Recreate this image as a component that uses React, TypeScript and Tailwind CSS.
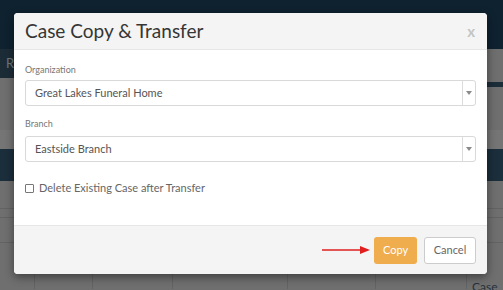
import React from "react";

function SelectBox({ value }: { value: string }) {
  return (
    <div className="flex h-[26px] w-full items-stretch rounded-[3px] border border-[#d9d9d9] bg-white">
      <div className="flex flex-1 items-center pl-[9px] text-[11px] text-[#555]">{value}</div>
      <div className="flex w-[13px] items-center justify-center border-l border-[#dcdcdc]">
        <svg width="6" height="4" viewBox="0 0 6 4">
          <path d="M0 0 L6 0 L3 4 Z" fill="#8a8a8a" />
        </svg>
      </div>
    </div>
  );
}

export default function App() {
  return (
    <div
      className="relative h-[290px] w-[503px] overflow-hidden bg-[#6f6f6f]"
      style={{ fontFamily: '"Lato", "Open Sans", sans-serif' }}
    >
      {/* dimmed page behind */}
      <div className="h-[49px] bg-[#0f2230]" />
      <div className="flex h-[33px]">
        <div className="flex h-[29px] w-[30px] items-center bg-[#1c2c37] pl-[6px] text-[13px] text-[#6e7a82]">
          R
        </div>
        <div className="flex-1 bg-[#6f6f6f]" />
      </div>
      <div className="flex h-[5px]">
        <div className="w-[30px] bg-[#6f6f6f]" />
        <div className="flex-1 bg-[#1b2d39]" />
      </div>
      <div className="flex h-[62px] flex-col">
        <div className="h-[43px] bg-[#6f6f6f]" />
        <div className="h-[19px] bg-[#757575]" />
      </div>
      <div className="h-[32px] bg-[#1b2e3b]" />
      <div className="h-[28px] border-b border-[#636363]" />
      <div className="h-[9px] border-b border-[#636363]" />
      <div className="h-[25px] border-b border-[#636363]" />
      <div className="h-[30px]" />
      <div className="flex h-[16px]">
        <div className="w-[35px] border-r border-[#636363]" />
        <div className="w-[58px] border-r border-[#636363]" />
        <div className="w-[80px] border-r border-[#636363]" />
        <div className="w-[115px] border-r border-[#636363]" />
        <div className="w-[88px] border-r border-[#636363]" />
        <div className="w-[91px] border-r border-[#636363]" />
        <div className="pl-[5px] pt-[7px] text-[12px] leading-[14px] text-[#25323b]">Case</div>
      </div>

      {/* modal */}
      <div className="absolute left-[14px] top-[13px] flex h-[261px] w-[473px] flex-col overflow-hidden rounded-[4px] bg-white shadow-[0_3px_10px_rgba(0,0,0,0.45)]">
        <div className="flex h-[37px] items-center justify-between border-b border-[#e6e6e6] bg-[#f4f4f4] pl-[11px] pr-[12px]">
          <div className="text-[19px] leading-[24px] text-[#363636]">Case Copy &amp; Transfer</div>
          <div className="pb-[1px] text-[15px] font-bold leading-[16px] text-[#c4c4c4]">x</div>
        </div>
        <div className="flex flex-1 flex-col px-[11px] pt-[14px]">
          <div className="h-[12px] text-[9px] leading-[12px] text-[#777]">Organization</div>
          <div className="mt-[4px]">
            <SelectBox value="Great Lakes Funeral Home" />
          </div>
          <div className="mt-[12px] h-[12px] text-[9px] leading-[12px] text-[#777]">Branch</div>
          <div className="mt-[6px]">
            <SelectBox value="Eastside Branch" />
          </div>
          <div className="mt-[19px] flex items-center gap-[5px]">
            <div className="h-[9px] w-[9px] rounded-[1px] border border-[#777] bg-white" />
            <div className="text-[11px] leading-[14px] text-[#666]">Delete Existing Case after Transfer</div>
          </div>
        </div>
        <div className="flex h-[49px] items-center justify-end gap-[7px] border-t border-[#e6e6e6] bg-[#f4f4f4] pr-[11px]">
          <svg width="50" height="10" viewBox="0 0 50 10" className="mr-[-5px]">
            <line x1="0" y1="5" x2="40" y2="5" stroke="#e01f1f" strokeWidth="1.6" />
            <path d="M38 1 L48 5 L38 9 Z" fill="#e01f1f" />
          </svg>
          <div className="flex h-[27px] w-[43px] items-center justify-center rounded-[3px] bg-[#f0ad4e] text-[11px] text-white">
            Copy
          </div>
          <div className="flex h-[27px] w-[52px] items-center justify-center rounded-[3px] border border-[#cccccc] bg-white text-[11px] text-[#666]">
            Cancel
          </div>
        </div>
      </div>
    </div>
  );
}
